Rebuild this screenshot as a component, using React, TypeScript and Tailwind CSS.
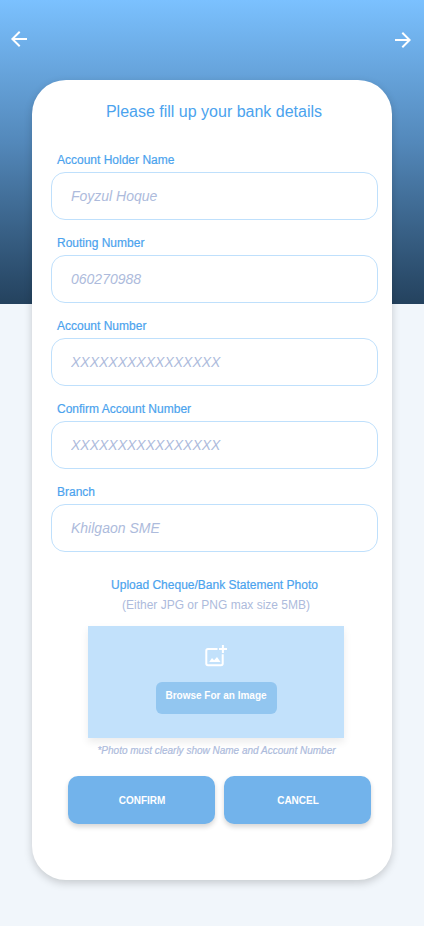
import { MdArrowBack, MdArrowForward } from 'react-icons/md';

const fields = [
  { label: 'Account Holder Name', placeholder: 'Foyzul Hoque' },
  { label: 'Routing Number', placeholder: '060270988' },
  { label: 'Account Number', placeholder: 'XXXXXXXXXXXXXXXX' },
  { label: 'Confirm Account Number', placeholder: 'XXXXXXXXXXXXXXXX' },
  { label: 'Branch', placeholder: 'Khilgaon SME' },
];

function Field({ label, placeholder }: { label: string; placeholder: string }) {
  return (
    <label className="flex h-[83px] flex-col">
      <span className="h-5 pl-1.5 text-xs leading-4 text-[#4ba3ee] [-webkit-text-stroke:0.2px_#4ba3ee]">{label}</span>
      <input
        type="text"
        placeholder={placeholder}
        className="h-12 w-[327px] rounded-[14px] border border-[#bfe0fc] bg-white pl-[19px] text-sm italic outline-none placeholder:text-[#adbbdc] placeholder:opacity-100"
      />
    </label>
  );
}

function AddPhotoIcon() {
  return (
    <svg width="24" height="24" viewBox="0 0 24 24" fill="none" stroke="currentColor" strokeWidth="2">
      <path d="M13.5 5H4a1.7 1.7 0 0 0-1.7 1.7v12.8A1.7 1.7 0 0 0 4 21.2h13a1.7 1.7 0 0 0 1.7-1.7v-9.3" />
      <path d="M18.9 1v8M15 5h8" />
      <path d="M5.2 17.9 8 14l2.1 2.3 2.9-3.3 3.5 4.9z" fill="currentColor" stroke="none" />
    </svg>
  );
}

export default function App() {
  return (
    <main className="h-[926px] w-[424px] overflow-hidden bg-[#f1f6fb] font-['Liberation_Sans',Arial,sans-serif]">
      <header className="h-[304px] bg-linear-to-b from-[#7bc1ff] via-[#5388ba] via-47% to-[#24425e]">
        <nav className="flex h-20 justify-between pl-[7px] pr-[9px] pt-[27px] text-white">
          <button aria-label="Back" className="h-6">
            <MdArrowBack size={24} />
          </button>
          <button aria-label="Next" className="mt-px h-6">
            <MdArrowForward size={24} />
          </button>
        </nav>
        <section className="ml-8 h-[800px] w-[360px] rounded-[34px] bg-white shadow-[0_3px_8px_rgba(0,0,0,0.18)]">
          <h1 className="pl-1 pt-5 text-center text-base text-[#4ba3ee]">
            Please fill up your bank details
          </h1>
          <form className="mt-7 pl-[19px]">
            {fields.map((f) => (
              <Field key={f.label} {...f} />
            ))}
          </form>
          <div className="flex flex-col items-center pl-[5px] pt-2">
            <p className="text-xs leading-5 text-[#4ba3ee] [-webkit-text-stroke:0.2px_#4ba3ee]">Upload Cheque/Bank Statement Photo</p>
            <p className="pl-[3px] text-xs leading-5 text-[#adbbdc]">(Either JPG or PNG max size 5MB)</p>
          </div>
          <div className="ml-14 mt-[11px] flex h-28 w-64 flex-col items-center bg-[#c2e1fb] pt-[18px] text-white shadow-[0_4px_8px_rgba(0,0,0,0.08)]">
            <AddPhotoIcon />
            <button className="mt-3.5 h-8 w-[121px] rounded-md bg-[#92c6f0] pb-[5px] text-[10px] font-bold">
              Browse For an Image
            </button>
          </div>
          <p className="mt-[7px] pl-[9px] text-center text-[10px] italic leading-3 text-[#adbbdc] [-webkit-text-stroke:0.2px_#adbbdc]">
            *Photo must clearly show Name and Account Number
          </p>
          <div className="mt-[19px] flex gap-[9px] pl-9 text-[10px] font-bold text-white">
            <button className="h-12 w-[147px] rounded-[10px] bg-[#72b3eb] pl-px shadow-[0_3px_5px_rgba(0,0,0,0.16)]">
              CONFIRM
            </button>
            <button className="h-12 w-[147px] rounded-[10px] bg-[#72b3eb] pl-px shadow-[0_3px_5px_rgba(0,0,0,0.16)]">
              CANCEL
            </button>
          </div>
        </section>
      </header>
    </main>
  );
}
